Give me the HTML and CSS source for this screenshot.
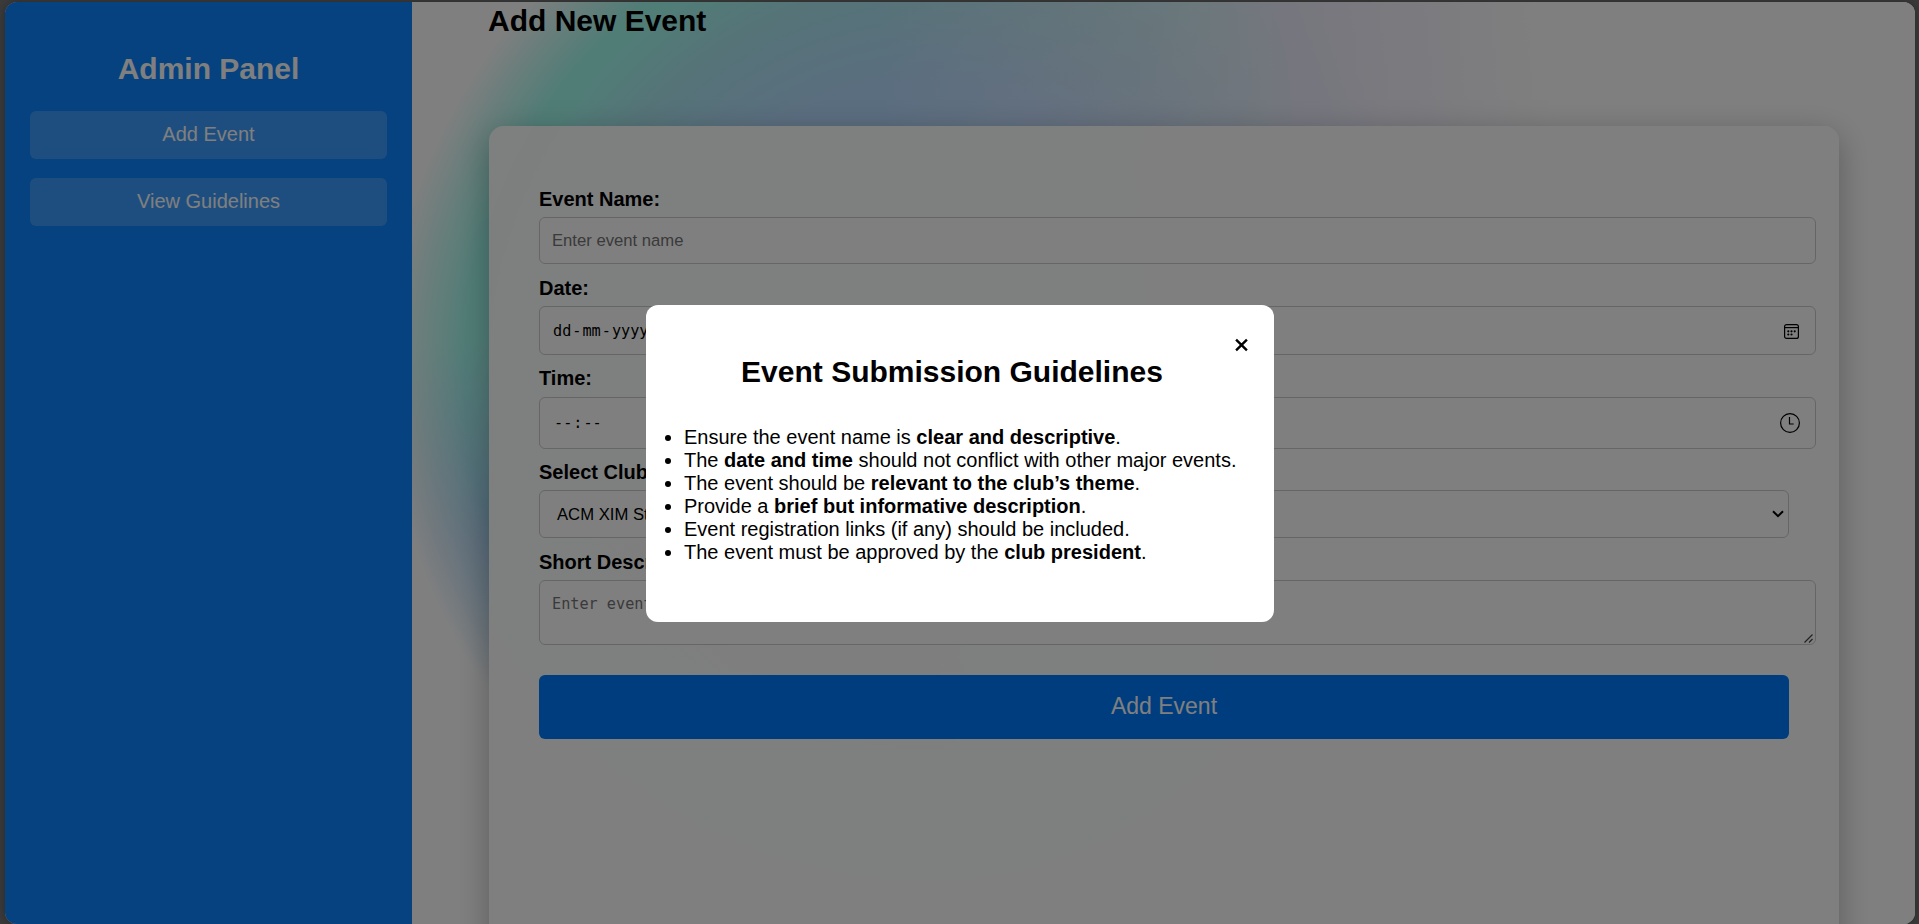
FILE: index.html
```html
<!DOCTYPE html>
<html lang="en">
<head>
<meta charset="utf-8">
<title>Admin Panel</title>
<link rel="stylesheet" href="styles.css">
</head>
<body>
<div class="shell">
  <aside class="sidebar">
    <h2 class="sidebar-title">Admin Panel</h2>
    <button class="side-btn">Add Event</button>
    <button class="side-btn">View Guidelines</button>
  </aside>
  <main class="main">
    <h2 class="main-title">Add New Event</h2>
    <form class="card">
      <label class="label">Event Name:</label>
      <div class="field name"><span class="hint">Enter event name</span></div>
      <label class="label">Date:</label>
      <div class="field date"><span class="mono date-text"><i>dd</i>-<i>mm</i>-<i>yyyy</i></span>
        <svg class="cal" viewBox="0 0 15 15"><rect x=".6" y=".6" width="13.8" height="13.8" rx="2"/><path d="M.6 3.6h13.8"/><g class="dots"><circle cx="4.3" cy="7.3" r="1.1"/><circle cx="7.5" cy="7.3" r="1.1"/><circle cx="10.7" cy="7.3" r="1.1"/><circle cx="4.3" cy="10.5" r="1.1"/><circle cx="7.5" cy="10.5" r="1.1"/></g></svg>
      </div>
      <label class="label time-label">Time:</label>
      <div class="field time"><span class="mono date-text">--<i>:</i>--</span>
        <svg class="clock" viewBox="0 0 20 20"><circle cx="10" cy="10" r="9.4"/><path d="M9.5 4v7h4.2"/></svg>
      </div>
      <label class="label">Select Club:</label>
      <div class="field select"><span>ACM XIM Student Chapter</span>
        <svg class="chev" viewBox="0 0 12 8"><path d="M1 1.2l5 5 5-5"/></svg>
      </div>
      <label class="label">Short Description:</label>
      <div class="field area"><span class="mono hint">Enter event description</span>
        <svg class="grip" viewBox="0 0 9 9"><path d="M.5 8.5l8-8M5 8.5L8.5 5"/></svg>
      </div>
      <button type="button" class="submit">Add Event</button>
    </form>
  </main>
</div>
<div class="overlay">
  <section class="modal">
    <span class="close"><svg viewBox="0 0 12 12"><path d="M1 1l10 10M11 1L1 11"/></svg></span>
    <h2 class="modal-title">Event Submission Guidelines</h2>
    <ul class="rules">
      <li>Ensure the event name is <b>clear and descriptive</b>.</li>
      <li>The <b>date and time</b> should not conflict with other major events.</li>
      <li>The event should be <b>relevant to the club’s theme</b>.</li>
      <li>Provide a <b>brief but informative description</b>.</li>
      <li>Event registration links (if any) should be included.</li>
      <li>The event must be approved by the <b>club president</b>.</li>
    </ul>
  </section>
</div>
</body>
</html>
```
FILE: styles.css
```css
* { box-sizing: border-box; }
html, body { margin: 0; height: 100%; overflow: hidden; }
body {
  background: #757575;
  font-family: "Liberation Sans", Arial, sans-serif;
  font-size: 20px;
  line-height: 23px;
  color: #000;
  padding: 2px 4px 0 5px;
}
h2 { margin: 0; font-size: 30px; line-height: 36px; }
.shell {
  display: flex;
  height: 922px;
  border-radius: 12px;
  overflow: hidden;
  background: #fff;
  box-shadow: 0 0 8px rgba(0, 0, 0, .3);
}
.sidebar {
  width: 407px;
  flex: none;
  background: #0b84ff;
  padding: 49px 25px 0;
  text-align: center;
  color: #fff;
}
.sidebar-title { margin-bottom: 24px; }
.side-btn {
  display: block;
  width: 357px;
  height: 48px;
  margin-bottom: 19px;
  padding: 0 0 1px;
  border: 0;
  border-radius: 6px;
  background: #3d9dff;
  color: #fff;
  font: 20px "Liberation Sans", Arial, sans-serif;
}
.main {
  flex: 1;
  padding: 1px 76px 0 77px;
  background:
    linear-gradient(85deg, rgba(255,255,255,0) 540px, rgba(240,234,252,.5) 800px, rgba(238,236,253,.95) 950px, #fff 1210px),
    radial-gradient(circle at 523px 370px, rgba(255,255,255,0) 470px, rgba(255,255,255,.5) 512px, #fff 550px),
    linear-gradient(180deg, rgba(170,206,246,0) 340px, rgba(170,206,246,.85) 540px),
    radial-gradient(circle at 523px 370px, #b6dcff 0, #b6dcff 290px, #abe8f0 390px, #a2faee 450px);
}
.main-title { margin: 0 0 87px -1px; }
.card {
  display: flex;
  flex-direction: column;
  height: 900px;
  padding: 62px 23px 0 50px;
  border-radius: 15px;
  background: rgba(255, 255, 255, .96);
  box-shadow: 0 8px 32px rgba(0, 0, 0, .28);
}
.label { font-weight: bold; height: 23px; margin-bottom: 6px; }
.time-label { margin: -1px 0 7px; }
.field {
  display: flex;
  align-items: center;
  justify-content: space-between;
  border: 1px solid #ccc;
  border-radius: 6px;
  background: #fff;
  font-size: 16.67px;
  padding: 0 12px;
}
.hint { color: #757575; }
.mono { font-family: "DejaVu Sans Mono", monospace; font-size: 15.2px; }
.date-text i { font-style: normal; padding: 0 1px; }
.field svg, .close svg { fill: none; stroke: #000; stroke-width: 1.2; }
.name { height: 47px; margin-bottom: 13px; }
.date { height: 49px; margin-bottom: 13px; padding: 1px 16px 0 12px; }
.time { height: 52px; margin-bottom: 12px; padding: 0 15px 0 14px; }
.select { height: 48px; width: 1250px; margin-bottom: 13px; padding: 0 4px 0 17px; }
.area { height: 65px; align-items: flex-start; padding: 12px 2px 0 12px; }
.cal { width: 15px; height: 15px; }
.field .dots { fill: #000; stroke: none; }
.clock { width: 20px; height: 20px; }
.field .chev { width: 12px; height: 8px; stroke-width: 2; }
.field .grip { width: 9px; height: 9px; align-self: flex-end; margin-bottom: 1px; stroke: #444; }
.submit {
  width: 1250px;
  height: 64px;
  margin-top: 30px;
  padding: 0 0 2px;
  border: 0;
  border-radius: 6px;
  background: #007bff;
  color: #fff;
  font: 23px "Liberation Sans", Arial, sans-serif;
}
.overlay {
  position: fixed;
  inset: 0;
  display: flex;
  align-items: flex-start;
  padding: 305px 0 0 646px;
  background: rgba(0, 0, 0, .5);
}
.modal {
  width: 628px;
  height: 317px;
  border-radius: 12px;
  background: #fff;
  padding: 33px 37px 0 21px;
}
.close { display: flex; justify-content: flex-end; margin-right: -11px; height: 16px; }
.close svg { width: 13px; height: 14px; stroke-width: 2.2; }
.modal-title { text-align: center; margin-bottom: 36px; }
.rules { margin: 0; padding: 0 0 0 17px; white-space: nowrap; }
```
